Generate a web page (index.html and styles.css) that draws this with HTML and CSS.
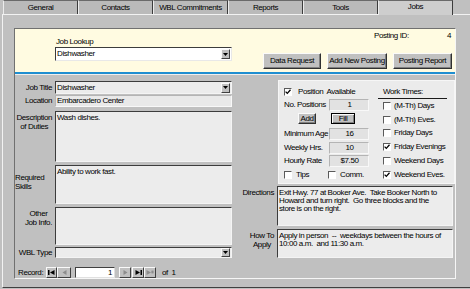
FILE: index.html
```html
<!DOCTYPE html>
<html lang="en">
<head>
  <meta charset="UTF-8">
  <meta name="viewport" content="width=device-width, initial-scale=1.0">
  <title>Jobs</title>
  <link rel="stylesheet" href="styles.css">
</head>
<body>
<div class="app">
  <div class="tabs">
    <div class="tab">General</div>
    <div class="tab">Contacts</div>
    <div class="tab">WBL Commitments</div>
    <div class="tab">Reports</div>
    <div class="tab">Tools</div>
    <div class="tab active">Jobs</div>
  </div>

  <div class="page">
    <div class="frame">

      <!-- cabecera amarilla -->
      <div class="header">
        <div class="lookup">
          <div class="lookup-label">Job Lookup</div>
          <div class="combo white">
            <span>Dishwasher</span>
            <span class="drop"><svg width="5" height="3" viewBox="0 0 5 3"><path d="M0 0h5L2.5 3z"/></svg></span>
          </div>
        </div>
        <div class="posting">
          <div class="posting-id"><span>Posting ID:</span><span>4</span></div>
          <div class="header-buttons">
            <button class="btn w58">Data Request</button>
            <button class="btn w60">Add New Posting</button>
            <button class="btn w59">Posting Report</button>
          </div>
        </div>
      </div>

      <div class="body">
        <!-- columna izquierda -->
        <div class="left">
          <div class="row r-title">
            <label class="lbl">Job Title</label>
            <div class="combo box">
              <span>Dishwasher</span>
              <span class="drop"><svg width="5" height="3" viewBox="0 0 5 3"><path d="M0 0h5L2.5 3z"/></svg></span>
            </div>
          </div>
          <div class="row r-location">
            <label class="lbl">Location</label>
            <div class="field">Embarcadero Center</div>
          </div>
          <div class="row r-desc">
            <label class="lbl top"><span class="stack">Description<br>of Duties</span></label>
            <div class="box area">Wash dishes.</div>
          </div>
          <div class="row r-skills">
            <label class="lbl top"><span class="stack left">Required<br>Skills</span></label>
            <div class="box area">Ability to work fast.</div>
          </div>
          <div class="row r-other">
            <label class="lbl top"><span class="stack">Other<br>Job Info.</span></label>
            <div class="box area"></div>
          </div>
          <div class="row r-wbl">
            <label class="lbl">WBL Type</label>
            <div class="combo box">
              <span></span>
              <span class="drop"><svg width="5" height="3" viewBox="0 0 5 3"><path d="M0 0h5L2.5 3z"/></svg></span>
            </div>
          </div>

          <div class="record">
            <span class="record-label">Record:</span>
            <span class="nav w11"><svg width="7" height="5" viewBox="0 0 7 5"><rect width="1.5" height="5"/><path d="M6.5 0v5L2 2.5z"/></svg></span>
            <span class="nav w13"><svg width="5" height="5" viewBox="0 0 5 5"><path d="M4.5 0v5L0.5 2.5z" fill="#8c8c8c"/></svg></span>
            <span class="record-input">1</span>
            <span class="nav w12"><svg width="5" height="5" viewBox="0 0 5 5"><path d="M0.5 0v5l4-2.5z" fill="#8c8c8c"/></svg></span>
            <span class="nav w12 tight"><svg width="7" height="5" viewBox="0 0 7 5"><path d="M0.5 0v5L5 2.5z"/><rect x="5.5" width="1.5" height="5"/></svg></span>
            <span class="nav w12"><svg width="8" height="5" viewBox="0 0 8 5"><path d="M0.5 0v5L5 2.5z" fill="#8c8c8c"/><path d="M6.5 0.5v3M5 2h3M5.4 1l2.2 2M7.6 1l-2.2 2" stroke="#8c8c8c" stroke-width="0.8"/></svg></span>
            <span class="record-of">of&nbsp; 1</span>
          </div>
        </div>

        <!-- columna derecha -->
        <div class="right">
          <div class="panel">
            <div class="pcol">
              <div class="prow p-avail">
                <span class="cb"><svg width="6" height="6" viewBox="0 0 6 6"><path d="M0.6 2.6l1.7 1.8 3.2-3.6" stroke="#000" stroke-width="1.3" fill="none"/></svg></span>
                <span>Position&nbsp; Available</span>
              </div>
              <div class="frow p-num">
                <span>No. Positions</span>
                <span class="field num">1</span>
              </div>
              <div class="p-btns">
                <button class="btn small add">Add</button>
                <button class="btn small fill">Fill</button>
              </div>
              <div class="frow p-age">
                <span>Minimum Age</span>
                <span class="field num">16</span>
              </div>
              <div class="frow p-hrs">
                <span>Weekly Hrs.</span>
                <span class="field num">10</span>
              </div>
              <div class="frow p-rate">
                <span>Hourly Rate</span>
                <span class="field num">$7.50</span>
              </div>
              <div class="prow p-tips">
                <span class="opt"><span class="cb"></span><span>Tips</span></span>
                <span class="opt"><span class="cb"></span><span>Comm.</span></span>
              </div>
            </div>

            <div class="wcol">
              <div class="wt">Work Times:</div>
              <div class="wrow"><span class="cb"></span><span>(M-Th) Days</span></div>
              <div class="wrow"><span class="cb"></span><span>(M-Th) Eves.</span></div>
              <div class="wrow"><span class="cb"></span><span>Friday Days</span></div>
              <div class="wrow"><span class="cb"><svg width="6" height="6" viewBox="0 0 6 6"><path d="M0.6 2.6l1.7 1.8 3.2-3.6" stroke="#000" stroke-width="1.3" fill="none"/></svg></span><span>Friday Evenings</span></div>
              <div class="wrow"><span class="cb"></span><span>Weekend Days</span></div>
              <div class="wrow"><span class="cb"><svg width="6" height="6" viewBox="0 0 6 6"><path d="M0.6 2.6l1.7 1.8 3.2-3.6" stroke="#000" stroke-width="1.3" fill="none"/></svg></span><span>Weekend Eves.</span></div>
            </div>
          </div>

          <div class="drow d-dir">
            <label class="lbl top">Directions</label>
            <div class="box area text">Exit Hwy. 77 at Booker Ave.&nbsp; Take Booker North to<br>Howard and turn right.&nbsp; Go three blocks and the<br>store is on the right.</div>
          </div>
          <div class="drow d-how">
            <label class="lbl top"><span class="stack">How To<br>Apply</span></label>
            <div class="box area text">Apply in person&nbsp; --&nbsp; weekdays between the hours of<br>10:00 a.m.&nbsp; and 11:30 a.m.</div>
          </div>
        </div>
      </div>

    </div>
  </div>
</div>
</body>
</html>
```

FILE: styles.css
```css
* {
  box-sizing: border-box;
}
body {
  margin: 0;
  background-color: #c0c0c0;
  font-family: "Liberation Sans", Arial, sans-serif;
  font-size: 8px;
  line-height: 10px;
  letter-spacing: -0.4px;
  white-space: nowrap;
  color: #000;
}
.app {
  width: 470px;
  height: 289px;
  overflow: hidden;
}

/* pestañas */
.tabs {
  display: flex;
  height: 14px;
  padding-left: 3px;
}
.tab {
  width: 75px;
  height: 14px;
  padding-top: 2px;
  text-align: center;
  background-color: #bababa;
  border-top: 1px solid #6a6a6a;
  border-left: 1px solid #ececec;
  border-right: 1px solid #3c3c3c;
}
.tab.active {
  height: 15px;
  padding-top: 1px;
  background-color: #cecece;
  position: relative;
  z-index: 1;
}

.page {
  height: 274px;
  margin-left: 2px;
  padding: 13px 0 0 11px;
  border-top: 1px solid #f2f2f2;
  border-left: 1px solid #f2f2f2;
  border-bottom: 1px solid #404040;
}
.frame {
  width: 442px;
  height: 251px;
  border: 1px solid;
  border-color: #707070 #f6f6f6 #f6f6f6 #707070;
}

/* cabecera */
.header {
  display: flex;
  justify-content: space-between;
  height: 45px;
  padding-right: 3px;
  background-color: #fffbe1;
  border-bottom: 2px solid #1f8ed0;
}
.lookup {
  padding: 8px 0 0 40px;
}
.lookup-label {
  padding-left: 1px;
}
.posting {
  display: flex;
  flex-direction: column;
  align-items: flex-end;
  padding-top: 2px;
}
.posting-id {
  display: flex;
  justify-content: space-between;
  width: 78px;
  padding-right: 1px;
}
.header-buttons {
  display: flex;
  gap: 6px;
  margin-top: 12px;
}

.btn {
  height: 16px;
  padding: 0;
  font: inherit;
  letter-spacing: inherit;
  color: #000;
  background-color: #c0c0c0;
  border: 1px solid;
  border-color: #fafafa #303030 #303030 #fafafa;
  box-shadow: inset -1px -1px 0 #808080;
}
.w58 { width: 58px; }
.w59 { width: 59px; }
.w60 { width: 60px; }

/* cajas */
.combo {
  display: flex;
  align-items: center;
  justify-content: space-between;
  width: 177px;
  height: 14px;
  padding-left: 1px;
  border: 1px solid;
  border-color: #3c3c3c #e8e8e8 #e8e8e8 #3c3c3c;
}
.combo.white {
  background-color: #fff;
}
.drop {
  display: flex;
  align-items: center;
  justify-content: center;
  width: 9px;
  height: 10px;
  margin-right: 1px;
  background-color: #c0c0c0;
  border: 1px solid;
  border-color: #fafafa #404040 #404040 #fafafa;
}
.box {
  background-color: #ececec;
  border: 1px solid;
  border-color: #3c3c3c #f4f4f4 #f4f4f4 #3c3c3c;
}
.area {
  padding: 1px 2px 0 1px;
}
.area.text {
  line-height: 8px;
  padding-top: 2px;
}
.field {
  height: 12px;
  padding-left: 1px;
  line-height: 10px;
  background-color: #e9e9e9;
  border: 1px solid;
  border-color: #b4b4b4 #f8f8f8 #f8f8f8 #b4b4b4;
}
.field.num {
  display: block;
  width: 40px;
  text-align: center;
  background-color: #e2e2e2;
}

/* columnas */
.body {
  display: flex;
  gap: 2px;
  height: 204px;
  border-top: 1px solid #eeeeee;
}
.left {
  width: 217px;
  padding-top: 6px;
}
.right {
  width: 221px;
  padding-top: 5px;
}

.row {
  display: grid;
  grid-template-columns: 37px 177px;
  column-gap: 3px;
}
.lbl {
  align-self: center;
  text-align: right;
}
.lbl.top {
  align-self: start;
  padding-top: 2px;
  line-height: 9px;
}
.stack {
  display: inline-block;
  vertical-align: top;
  text-align: center;
  line-height: 9px;
}
.stack.left {
  text-align: left;
}
.r-title { height: 13px; }
.r-title .combo { height: 13px; }
.r-location { height: 12px; margin-top: 1px; }
.r-desc { height: 51px; margin-top: 4px; }
.r-skills { height: 39px; margin-top: 3px; }
.r-other { height: 38px; margin-top: 3px; }
.r-wbl { height: 11px; margin-top: 2px; }
.r-wbl .combo { height: 11px; }
.r-wbl .drop { height: 9px; }

/* navegador de registros */
.record {
  display: flex;
  align-items: center;
  height: 11px;
  margin-top: 9px;
  padding-left: 3px;
}
.record-label {
  width: 28px;
}
.nav {
  display: flex;
  align-items: center;
  justify-content: center;
  height: 11px;
  background-color: #c0c0c0;
  border: 1px solid;
  border-color: #fafafa #404040 #404040 #fafafa;
}
.w11 { width: 11px; }
.w12 { width: 12px; }
.w13 { width: 14px; }
.record-input {
  width: 40px;
  height: 11px;
  margin: 0 4px 0 4px;
  padding-right: 2px;
  text-align: right;
  line-height: 9px;
  background-color: #fff;
  border: 1px solid;
  border-color: #404040 #e0e0e0 #e0e0e0 #404040;
}
.nav.tight {
  margin-left: 1px;
}
.record-of {
  margin-left: 6px;
}

/* panel derecho */
.panel {
  display: flex;
  width: 177px;
  height: 104px;
  margin-left: 44px;
  padding: 4px 0 0 5px;
  background-color: #ebebeb;
  border: 1px solid #f6f6f6;
}
.pcol {
  width: 88px;
}
.wcol {
  width: 69px;
  margin-left: 6px;
}
.cb {
  display: inline-flex;
  align-items: center;
  justify-content: center;
  flex: none;
  width: 8px;
  height: 8px;
  background-color: #fff;
  border: 1px solid;
  border-color: #5a5a5a #ffffff #ffffff #5a5a5a;
}
.prow {
  display: flex;
  align-items: center;
}
.p-avail {
  height: 13px;
  gap: 6px;
}
.frow {
  display: grid;
  grid-template-columns: 45px 40px;
  align-items: center;
  height: 12px;
}
.p-num { margin-top: 1px; }
.p-btns {
  display: flex;
  gap: 15px;
  height: 11px;
  margin-top: 2px;
  padding-left: 14px;
}
.btn.small {
  height: 11px;
  line-height: 8px;
}
.add { width: 18px; }
.fill {
  width: 24px;
  border-color: #000;
  box-shadow: inset 1px 1px 0 #fafafa, inset -1px -1px 0 #808080;
}
.p-age { margin-top: 4px; }
.p-hrs { margin-top: 2px; }
.p-rate { margin-top: 1px; }
.p-tips {
  height: 9px;
  margin-top: 3px;
}
.opt {
  display: flex;
  align-items: center;
  gap: 4px;
  width: 50px;
}

.wt {
  height: 14px;
  padding: 2px 0 0 5px;
  border-bottom: 1px solid #1a1a1a;
}
.wrow {
  display: flex;
  align-items: center;
  gap: 3px;
  height: 13.8px;
  padding-left: 5px;
}

.drow {
  display: grid;
  grid-template-columns: 40px 176px;
  column-gap: 3px;
}
.d-dir {
  height: 40px;
  margin-top: 2px;
}
.d-how {
  height: 29px;
  margin-top: 3px;
}
```
